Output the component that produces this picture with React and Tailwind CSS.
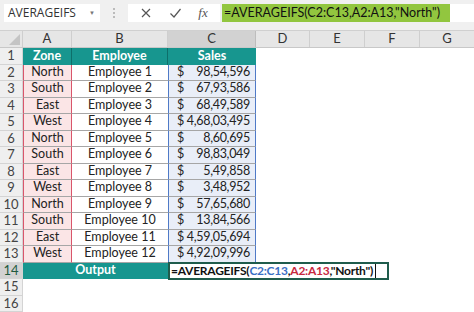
import React from "react";

const rows = [
  ["North", "Employee 1", "98,54,596"],
  ["South", "Employee 2", "67,93,586"],
  ["East", "Employee 3", "68,49,589"],
  ["West", "Employee 4", "4,68,03,495"],
  ["North", "Employee 5", "8,60,695"],
  ["South", "Employee 6", "98,83,049"],
  ["East", "Employee 7", "5,49,858"],
  ["West", "Employee 8", "3,48,952"],
  ["North", "Employee 9", "57,65,680"],
  ["South", "Employee 10", "13,84,566"],
  ["East", "Employee 11", "4,59,05,694"],
  ["West", "Employee 12", "4,92,09,996"],
];

function RowHead({ n, active }) {
  return (
    <div
      className={`w-[23px] shrink-0 h-full flex items-center justify-center border-r border-b border-[#d4d4d4] text-[13px] ${
        active ? "bg-[#d2d2d2] text-[#1f5a3f]" : "bg-[#efefef] text-[#444]"
      }`}
    >
      {n}
    </div>
  );
}

function Empty() {
  return (
    <>
      <div className="w-[54px] shrink-0 h-full" />
      <div className="w-[55px] shrink-0 h-full" />
      <div className="w-[55px] shrink-0 h-full" />
      <div className="w-[54px] shrink-0 h-full" />
    </>
  );
}

export default function App() {
  return (
    <div
      className="w-[474px] h-[312px] overflow-hidden bg-white text-[#222]"
      style={{ fontFamily: "Lato, 'Open Sans', sans-serif" }}
    >
      {/* Formula bar */}
      <div className="h-[31px] bg-[#f0f0f0] flex items-start pt-[4px] border-b border-[#d0d0d0]">
        <div className="ml-[4px] w-[96px] h-[18px] bg-white flex items-center justify-between pl-[4px] pr-[5px] text-[12px] text-[#333]" style={{ fontFamily: "'Open Sans', sans-serif" }}>
          <span>AVERAGEIFS</span>
          <span className="text-[6px] text-[#777]">▼</span>
        </div>
        <div className="w-[28px] h-[18px] flex items-center justify-center">
          <div className="flex flex-col gap-[2px]">
            <div className="w-[2px] h-[2px] bg-[#bbb]" />
            <div className="w-[2px] h-[2px] bg-[#bbb]" />
            <div className="w-[2px] h-[2px] bg-[#bbb]" />
          </div>
        </div>
        <div className="w-[92px] h-[18px] bg-white flex items-center justify-around px-[4px] text-[#555]">
          <svg width="12" height="12" viewBox="0 0 12 12">
            <path d="M2 2 L10 10 M10 2 L2 10" stroke="#555" strokeWidth="1.2" fill="none" />
          </svg>
          <svg width="13" height="12" viewBox="0 0 13 12">
            <path d="M1.5 6.5 L5 10 L11.5 2" stroke="#555" strokeWidth="1.2" fill="none" />
          </svg>
          <span className="italic text-[13px] text-[#555]" style={{ fontFamily: "'Liberation Serif', serif" }}>
            fx
          </span>
        </div>
        <div className="ml-[2px] w-[228px] h-[18px] bg-[#92c63f] flex items-center pl-[2px] text-[12.5px] whitespace-nowrap text-[#111]">
          =AVERAGEIFS(C2:C13,A2:A13,"North")
        </div>
        <div className="flex-1 h-[18px] bg-white" />
      </div>

      {/* Column headers */}
      <div className="h-[17px] flex bg-[#e6e6e6] text-[13px] text-[#333] border-b border-[#c8c8c8]">
        <div className="w-[23px] shrink-0 h-full relative border-r border-[#cfcfcf]">
          <svg className="absolute right-[2px] bottom-[2px]" width="11" height="11" viewBox="0 0 12 12">
            <path d="M12 0 L12 12 L0 12 Z" fill="#c4c4c4" />
          </svg>
        </div>
        <div className="w-[49px] shrink-0 flex items-center justify-center border-r border-[#cfcfcf]">A</div>
        <div className="w-[96px] shrink-0 flex items-center justify-center border-r border-[#cfcfcf]">B</div>
        <div className="w-[88px] shrink-0 flex items-center justify-center border-r border-[#bdbdbd] bg-[#d2d2d2]">C</div>
        <div className="w-[54px] shrink-0 flex items-center justify-center border-r border-[#cfcfcf]">D</div>
        <div className="w-[55px] shrink-0 flex items-center justify-center border-r border-[#cfcfcf]">E</div>
        <div className="w-[55px] shrink-0 flex items-center justify-center border-r border-[#cfcfcf]">F</div>
        <div className="w-[54px] shrink-0 flex items-center justify-center">G</div>
      </div>

      {/* Row 1 headers */}
      <div className="h-[16.5px] flex text-[12.5px]">
        <RowHead n={1} />
        <div className="w-[49px] shrink-0 bg-[#17968f] text-white font-bold flex items-center justify-center border-r border-[#0e6f6a]">Zone</div>
        <div className="w-[96px] shrink-0 bg-[#17968f] text-white font-bold flex items-center justify-center border-r border-[#0e6f6a]">Employee</div>
        <div className="w-[88px] shrink-0 bg-[#17968f] text-white font-bold flex items-center justify-center">Sales</div>
        <Empty />
      </div>

      {rows.map((r, i) => (
        <div key={i} className="h-[16.5px] flex text-[12.5px]">
          <RowHead n={i + 2} />
          <div className="w-[49px] shrink-0 bg-[#fbe5e6] flex items-center justify-center border-l border-r border-[#d9556b] border-b-[#a6a6a6] border-b">
            {r[0]}
          </div>
          <div className="w-[96px] shrink-0 flex items-center justify-center border-b border-[#a6a6a6]">
            {r[1]}
          </div>
          <div className="w-[88px] shrink-0 bg-[#e9eef8] flex items-center justify-between pl-[8px] pr-[5px] border-l border-r border-[#4f7ac7] border-b-[#a6a6a6] border-b">
            <span>$</span>
            <span className="tracking-[-0.3px]">{r[2]}</span>
          </div>
          <Empty />
        </div>
      ))}

      {/* Row 14 */}
      <div className="h-[16.5px] flex text-[12.5px] relative">
        <RowHead n={14} active />
        <div className="w-[145px] shrink-0 bg-[#17968f] text-white font-bold flex items-center justify-center">
          Output
        </div>
        <div className="absolute left-[168px] top-[-1px] w-[221px] h-[18px] bg-white border-2 border-[#1f5c4c] flex items-center pl-[1px] text-[12px] tracking-[-0.25px] font-bold text-[#111] whitespace-nowrap">
          <span>=AVERAGEIFS(</span>
          <span className="text-[#3a6fc4]">C2:C13</span>
          <span>,</span>
          <span className="text-[#c8283e]">A2:A13</span>
          <span>,"North")</span>
          <span className="ml-[2px] w-[1px] h-[14px] bg-[#111]" />
        </div>
      </div>

      {[15, 16].map((n) => (
        <div key={n} className="h-[16.5px] flex text-[12.5px]">
          <RowHead n={n} />
        </div>
      ))}
    </div>
  );
}
